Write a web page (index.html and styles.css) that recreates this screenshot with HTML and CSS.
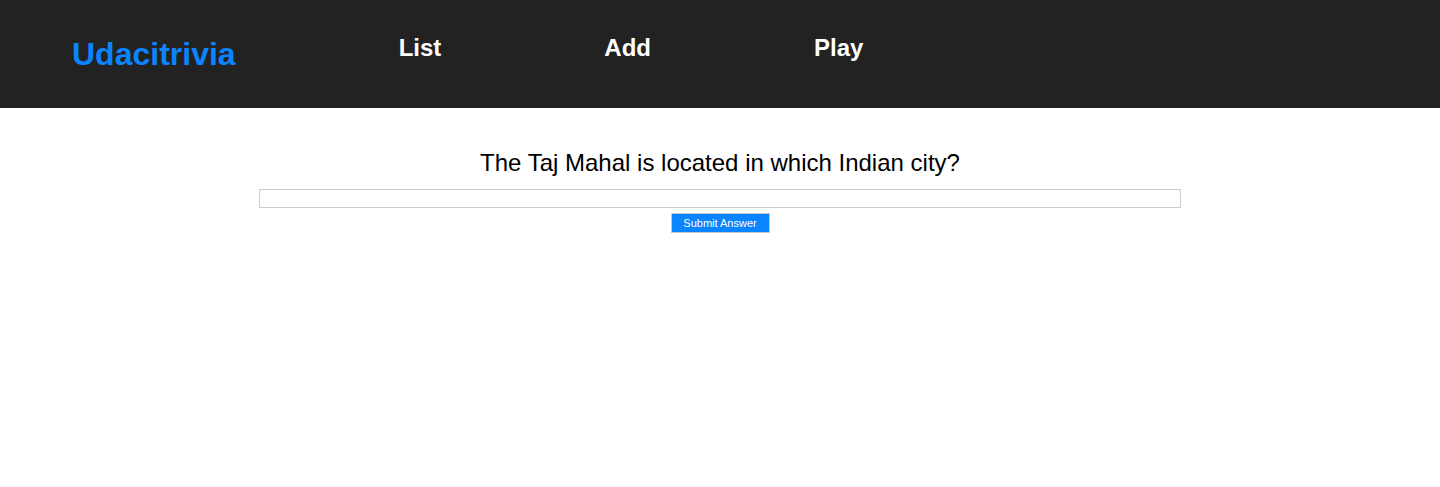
FILE: index.html
```html
<!DOCTYPE html>
<html lang="en">
<head>
<meta charset="utf-8">
<title>Udacitrivia</title>
<link rel="stylesheet" href="styles.css">
</head>
<body>
  <header class="app-header">
    <h1 class="logo">Udacitrivia</h1>
    <h2 class="nav-item">List</h2>
    <h2 class="nav-item">Add</h2>
    <h2 class="nav-item">Play</h2>
  </header>
  <main class="quiz-play">
    <div class="quiz-question">The Taj Mahal is located in which Indian city?</div>
    <form class="quiz-form">
      <input class="answer-input" type="text" name="answer">
      <input class="submit-button" type="submit" value="Submit Answer">
    </form>
  </main>
</body>
</html>
```
FILE: styles.css
```css
html, body {
  margin: 0;
  padding: 0;
  background: #ffffff;
  font-family: "Liberation Sans", Arial, Helvetica, sans-serif;
}

.app-header {
  box-sizing: border-box;
  height: 108px;
  background-color: #222222;
  display: flex;
  align-items: flex-start;
  gap: 163px;
  padding: 14px 0 0 72px;
  color: #ffffff;
}

.logo {
  margin: 21.5px 0 0;
  font-size: 32px;
  font-weight: bold;
  color: #0a84ff;
}

.nav-item {
  margin: 20px 0 0;
  font-size: 24px;
  font-weight: bold;
  color: #ffffff;
  cursor: pointer;
}

.quiz-play {
  display: flex;
  flex-direction: column;
  align-items: center;
  padding-top: 41px;
}

.quiz-question {
  font-size: 24px;
  color: #000000;
  line-height: 28px;
}

.quiz-form {
  display: flex;
  flex-direction: column;
  align-items: center;
  margin-top: 12px;
}

.answer-input {
  box-sizing: border-box;
  width: 922px;
  height: 19px;
  margin: 0;
  padding: 1px 2px;
  border: 1px solid #cccccc;
  background: #ffffff;
  outline: none;
}

.submit-button {
  box-sizing: border-box;
  width: 99px;
  height: 20px;
  margin: 5px 0 0;
  padding: 0;
  border: 1px solid #c8c8c8;
  background: #0a84ff;
  color: #ffffff;
  font-family: "Liberation Sans", Arial, sans-serif;
  font-size: 11px;
  cursor: pointer;
}
```
